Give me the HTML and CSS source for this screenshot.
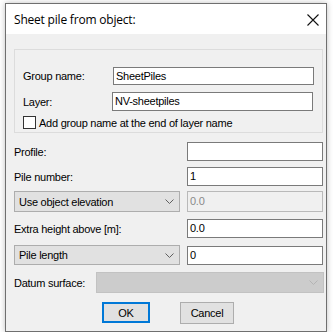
FILE: index.html
```html
<!DOCTYPE html>
<html>
<head>
<meta charset="utf-8">
<link rel="stylesheet" href="styles.css">
</head>
<body>
<div class="window">
  <div class="titlebar">
    <span class="title">Sheet pile from object:</span>
    <svg class="close" width="12" height="12" viewBox="0 0 12 12"><path d="M0.5 0.5 L11.5 11.5 M11.5 0.5 L0.5 11.5" stroke="#111" stroke-width="1.1" fill="none"/></svg>
  </div>
  <div class="content">
    <div class="groupbox">
      <div class="grow">
        <span class="glabel">Group name:</span>
        <div class="input gname">SheetPiles</div>
      </div>
      <div class="grow layer">
        <span class="glabel l2">Layer:</span>
        <div class="input glayer">NV-sheetpiles</div>
      </div>
      <div class="check">
        <span class="box"></span>
        <span>Add group name at the end of layer name</span>
      </div>
    </div>

    <div class="row r-profile">
      <span class="label">Profile:</span>
      <div class="input"></div>
    </div>
    <div class="row r-pile">
      <span class="label">Pile number:</span>
      <div class="input">1</div>
    </div>
    <div class="row r-elev">
      <div class="combo"><span>Use object elevation</span><svg width="9" height="5" viewBox="0 0 9 5"><path d="M0.5 0.5 L4.5 4.5 L8.5 0.5" stroke="#606060" fill="none"/></svg></div>
      <div class="input disabled">0.0</div>
    </div>
    <div class="row r-extra">
      <span class="label">Extra height above [m]:</span>
      <div class="input">0.0</div>
    </div>
    <div class="row r-length">
      <div class="combo"><span>Pile length</span><svg width="9" height="5" viewBox="0 0 9 5"><path d="M0.5 0.5 L4.5 4.5 L8.5 0.5" stroke="#606060" fill="none"/></svg></div>
      <div class="input">0</div>
    </div>
    <div class="datum">
      <span class="label">Datum surface:</span>
      <div class="combo dis"><span></span><svg width="9" height="5" viewBox="0 0 9 5"><path d="M0.5 0.5 L4.5 4.5 L8.5 0.5" stroke="#b4b4b4" fill="none"/></svg></div>
    </div>
    <div class="buttons">
      <div class="btn ok">OK</div>
      <div class="btn cancel">Cancel</div>
    </div>
  </div>
</div>
</body>
</html>
```

FILE: styles.css
```css
html, body {
  margin: 0;
  padding: 0;
  background: #ffffff;
}
body {
  font-family: "Liberation Sans", Arial, sans-serif;
  font-size: 11px;
  letter-spacing: -0.25px;
  color: #000;
}
.window {
  margin: 3px 0 0 5px;
  width: 320px;
  height: 327px;
  border: 1px solid #6f6f6f;
  background: #f0f0f0;
  box-shadow: 0 0 6px rgba(0,0,0,0.25);
  display: flex;
  flex-direction: column;
}
.titlebar {
  height: 30px;
  background: #ffffff;
  display: flex;
  align-items: center;
  justify-content: space-between;
  padding: 0 6px 0 8px;
}
.title {
  font-family: "Open Sans", "Noto Sans", sans-serif;
  font-size: 12px;
  letter-spacing: -0.2px;
  color: #000;
}
.close {
  margin-right: 1px;
  margin-top: 1px;
}
.content {
  padding-left: 8px;
  display: flex;
  flex-direction: column;
}
.groupbox {
  margin-top: 15px;
  width: 291px;
  border: 1px solid #dcdcdc;
  padding: 17px 8px 3px 8px;
  display: flex;
  flex-direction: column;
}
.grow {
  display: flex;
  align-items: center;
}
.grow.layer {
  margin-top: 7px;
}
.glabel {
  width: 90px;
}
.glabel.l2 {
  width: 89px;
}
.input {
  box-sizing: border-box;
  height: 19px;
  background: #fff;
  border: 1px solid #7a7a7a;
  padding: 0 2px;
  line-height: 17px;
  white-space: nowrap;
}
.gname {
  width: 201px;
  height: 18px;
  line-height: 16px;
}
.glayer {
  width: 201px;
}
.check {
  margin-top: 5px;
  display: flex;
  align-items: center;
  gap: 3px;
  height: 13px;
}
.box {
  box-sizing: border-box;
  width: 13px;
  height: 13px;
  border: 1px solid #333;
  background: #fff;
}
.row {
  display: grid;
  grid-template-columns: 166px 136px;
  column-gap: 7px;
  align-items: center;
}
.r-profile { margin-top: 9px; }
.r-pile { margin-top: 6px; }
.r-elev { margin-top: 5px; }
.r-extra { margin-top: 7px; }
.r-length { margin-top: 7px; }
.row .input { height: 19px; }
.r-elev .input { height: 21px; line-height: 19px; }
.input.disabled {
  background: #f0f0f0;
  border-color: #b9b9b9;
  color: #8a8a8a;
}
.combo {
  box-sizing: border-box;
  height: 21px;
  background: #e1e1e1;
  border: 1px solid #adadad;
  display: flex;
  align-items: center;
  justify-content: space-between;
  padding: 0 5px 0 4px;
}
.r-length .combo { height: 20px; }
.combo.dis {
  width: 228px;
  background: #cccccc;
  border-color: #c2c2c2;
}
.datum {
  margin-top: 7px;
  display: flex;
  align-items: center;
  justify-content: space-between;
  width: 310px;
}
.buttons {
  margin-top: 9px;
  display: flex;
  gap: 30px;
  padding-left: 88px;
}
.btn {
  box-sizing: border-box;
  height: 21px;
  display: flex;
  align-items: center;
  justify-content: center;
  background: #e1e1e1;
  border: 1px solid #adadad;
}
.btn.ok {
  width: 48px;
  border: 2px solid #0078d7;
}
.btn.cancel {
  width: 54px;
  height: 22px;
}
```
